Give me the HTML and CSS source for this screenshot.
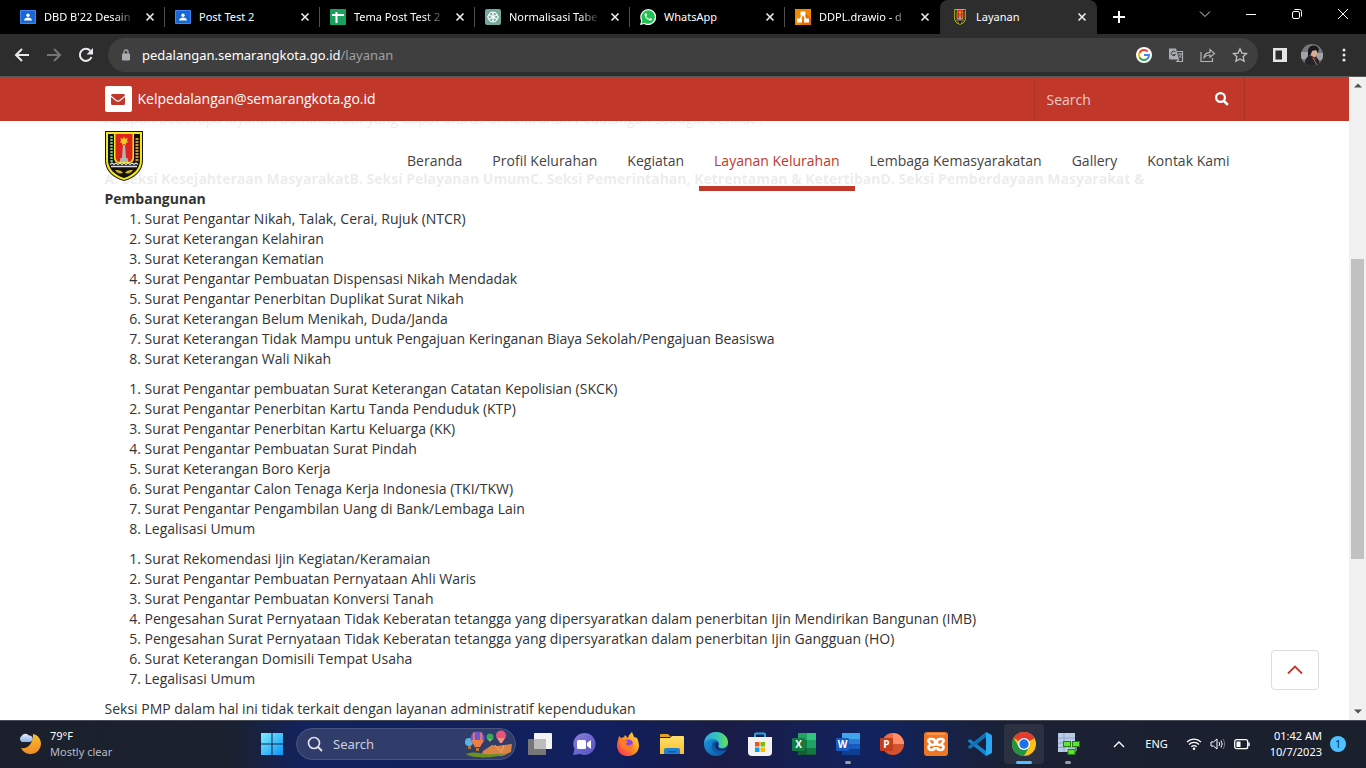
FILE: index.html
```html
<!DOCTYPE html>
<html lang="id">
<head>
<meta charset="utf-8">
<title>Layanan</title>
<link rel="stylesheet" href="styles.css">
</head>
<body>
<svg class="defs" aria-hidden="true">
  <defs>
    <linearGradient id="moon" x1="0" y1="0" x2="0" y2="1"><stop offset="0" stop-color="#f9c02f"/><stop offset="1" stop-color="#f08a24"/></linearGradient>
    <linearGradient id="cloud" x1="0" y1="0" x2="0" y2="1"><stop offset="0" stop-color="#e4edfb"/><stop offset="1" stop-color="#8fb1ea"/></linearGradient>
    <linearGradient id="win" gradientUnits="userSpaceOnUse" x1="1" y1="1" x2="23" y2="23"><stop offset="0" stop-color="#7df0ff"/><stop offset="1" stop-color="#0a93f5"/></linearGradient>
    <linearGradient id="meet" x1="0" y1="0" x2="1" y2="1"><stop offset="0" stop-color="#8f7fd6"/><stop offset="1" stop-color="#4f50c8"/></linearGradient>
    <linearGradient id="fox" x1="1" y1="0" x2="0" y2="1"><stop offset="0" stop-color="#ffe84a"/><stop offset=".45" stop-color="#ff9420"/><stop offset="1" stop-color="#f5225f"/></linearGradient>
    <linearGradient id="edge1" x1="0" y1="0" x2="1" y2="0"><stop offset="0" stop-color="#2aa8e8"/><stop offset=".6" stop-color="#37c8b4"/><stop offset="1" stop-color="#6be04f"/></linearGradient>
    <linearGradient id="edge2" x1="0" y1="0" x2="1" y2="1"><stop offset="0" stop-color="#1fa0e6"/><stop offset="1" stop-color="#0c4fa0"/></linearGradient>
    <linearGradient id="folder" x1="0" y1="0" x2="0" y2="1"><stop offset="0" stop-color="#ffdf6b"/><stop offset="1" stop-color="#f9bf2c"/></linearGradient>
    <symbol id="classroom" viewBox="0 0 16 14"><rect width="16" height="14" rx="1" fill="#4285f4"/><rect x="1" y="1" width="14" height="12" fill="#1967d2"/><circle cx="8" cy="5.300" r="1.700" fill="#fff"/><path d="M4 10.500c.4-2.200 2-3 4-3s3.600.8 4 3z" fill="#fff"/></symbol>
    <symbol id="x" viewBox="0 0 10 10"><path d="M1.500 1.500l7 7M8.500 1.500l-7 7" stroke="#e8e8e8" stroke-width="1.700" fill="none"/></symbol>
    <symbol id="crest" viewBox="0 0 38 50">
      <path d="M0 0H38V29C38 40 30 47 19 50C8 47 0 40 0 29Z" fill="#15150a"/>
      <path d="M1 1H37V29C37 39 30 46 19 49C8 46 1 39 1 29Z" fill="#f2e61c"/>
      <path d="M3 3H35V29C35 37 29 44 19 47C9 44 3 37 3 29Z" fill="#111"/>
      <path d="M9 2H29V27Q29 31 25 32H13Q9 31 9 27Z" fill="#f2e61c"/>
      <path d="M10.500 3H27.500V27Q27 30 24 31H14Q11 30 10.500 27Z" fill="#dd241c"/>
      <path d="M18 14h2l1 13h1.500l1 4h-9l1-4H17z" fill="#b4b4b4"/>
      <path d="M19 5.500l1 2.200 2.800-.5-1 2.500 1.700 1.500-2.400.6-.3 2.200-1.800-1-1.800 1-.3-2.200-2.400-.6 1.700-1.500-1-2.500 2.800.5z" fill="#edc81f"/>
      <path d="M6.500 5V31" stroke="#71c58b" stroke-width="2.400" stroke-dasharray="2 1"/>
      <path d="M32 7V30" stroke="#d8931c" stroke-width="3" stroke-dasharray="2 1"/>
      <path d="M5 33.500l2-1.500 2 1.500 2-1.500 2 1.500 2-1.500 2 1.500 2-1.500 2 1.500 2-1.500 2 1.500 2-1.500 2 1.500 2-1.500 2 1.500M6 35.500h26" stroke="#dedede" stroke-width="1.300" fill="none"/>
      <path d="M10 39c3 0 6 0 8 3-4 1-6 0-8-3zM28 39c-3 0-6 0-8 3 4 1 6 0 8-3z" fill="#d6b31e"/><path d="M17 44l2-4 2 4-2 2z" fill="#111"/>
    </symbol>
  </defs>
</svg>

<header class="browser">
  <div class="tabs">
    <div class="tab"><svg class="fav classroom"><use href="#classroom"/></svg><span class="tab-title faded">DBD B'22 Desain</span><button class="tab-close" aria-label="Tutup tab"><svg><use href="#x"/></svg></button></div>
    <div class="tab"><svg class="fav classroom"><use href="#classroom"/></svg><span class="tab-title">Post Test 2</span><button class="tab-close" aria-label="Tutup tab"><svg><use href="#x"/></svg></button></div>
    <div class="tab"><svg class="fav" viewBox="0 0 16 16"><rect width="16" height="16" rx="1" fill="#18a05e"/><path d="M2 6h12M6.500 3v11" stroke="#fff" stroke-width="2"/></svg><span class="tab-title faded">Tema Post Test 2</span><button class="tab-close" aria-label="Tutup tab"><svg><use href="#x"/></svg></button></div>
    <div class="tab"><svg class="fav" viewBox="0 0 16 16"><rect width="16" height="16" rx="2" fill="#75a99b"/><g fill="none" stroke="#fff" stroke-width=".8"><ellipse cx="8" cy="5.300" rx="3.600" ry="2.300"/><ellipse cx="8" cy="5.300" rx="3.600" ry="2.300" transform="rotate(60 8 8)"/><ellipse cx="8" cy="5.300" rx="3.600" ry="2.300" transform="rotate(120 8 8)"/><ellipse cx="8" cy="5.300" rx="3.600" ry="2.300" transform="rotate(180 8 8)"/><ellipse cx="8" cy="5.300" rx="3.600" ry="2.300" transform="rotate(240 8 8)"/><ellipse cx="8" cy="5.300" rx="3.600" ry="2.300" transform="rotate(300 8 8)"/></g></svg><span class="tab-title faded">Normalisasi Tabe</span><button class="tab-close" aria-label="Tutup tab"><svg><use href="#x"/></svg></button></div>
    <div class="tab"><svg class="fav" viewBox="0 0 16 16"><path d="M0 16l1.200-4.100A8 8 0 1 1 4.200 15z" fill="#fff"/><path d="M1.500 14.500l.9-3A6.700 6.700 0 1 1 4.600 13.700z" fill="#1fc24e"/><path d="M5.500 4.200c-1 .6-1.200 1.700-.5 3.100 1 2 2.400 3.400 4.300 4 1.500.5 2.500-.1 2.700-1.400L10.300 9l-1 1C8 9.500 7 8.500 6.300 7.200l.8-1-.7-2z" fill="#fff"/></svg><span class="tab-title">WhatsApp</span><button class="tab-close" aria-label="Tutup tab"><svg><use href="#x"/></svg></button></div>
    <div class="tab"><svg class="fav" viewBox="0 0 16 16"><rect width="16" height="16" fill="#f08705"/><path d="M10 4L16 10v6H6z" fill="#df6c0c"/><path d="M8 4L4.500 12M8 4l3.500 8" stroke="#fff" stroke-width="1.500"/><rect x="5.500" y="2.500" width="5" height="4" rx=".5" fill="#fff"/><rect x="2" y="9.500" width="5" height="4" rx=".5" fill="#fff"/><rect x="9" y="9.500" width="5" height="4" rx=".5" fill="#fff"/></svg><span class="tab-title faded">DDPL.drawio - d</span><button class="tab-close" aria-label="Tutup tab"><svg><use href="#x"/></svg></button></div>
    <div class="tab active"><svg class="fav" viewBox="0 0 38 50"><use href="#crest" width="38" height="50"/></svg><span class="tab-title">Layanan</span><button class="tab-close" aria-label="Tutup tab"><svg><use href="#x"/></svg></button></div>
    <button class="new-tab" aria-label="Tab baru"><svg viewBox="0 0 12 12"><path d="M6 0v12M0 6h12" stroke="#fff" stroke-width="2"/></svg></button>
    <div class="window-buttons">
      <button aria-label="Cari tab"><svg viewBox="0 0 12 12"><path d="M1 3.500l5 5 5-5" stroke="#ddd" fill="none"/></svg></button>
      <button aria-label="Kecilkan"><svg viewBox="0 0 12 12"><path d="M1 6.500h10" stroke="#fff"/></svg></button>
      <button aria-label="Pulihkan"><svg viewBox="0 0 12 12"><rect x="1.500" y="3.500" width="7" height="7" rx="1.500" stroke="#fff" fill="none"/><path d="M3.500 1.500h5a2 2 0 0 1 2 2v5" stroke="#fff" fill="none"/></svg></button>
      <button aria-label="Tutup"><svg viewBox="0 0 12 12"><path d="M1 1l10 10M11 1L1 11" stroke="#fff"/></svg></button>
    </div>
  </div>
  <div class="toolbar">
    <button class="tool" aria-label="Kembali"><svg viewBox="0 0 16 16"><path d="M15 8H2.500M8 2L2 8l6 6" stroke="#e8eaed" stroke-width="2" fill="none"/></svg></button>
    <button class="tool" aria-label="Maju"><svg viewBox="0 0 16 16"><path d="M1 8h12.500M8 2l6 6-6 6" stroke="#757575" stroke-width="2" fill="none"/></svg></button>
    <button class="tool" aria-label="Muat ulang"><svg viewBox="0 0 16 16"><path d="M13.500 10A6 6 0 1 1 12.300 3.800" stroke="#e8eaed" stroke-width="2" fill="none"/><path d="M15 1v6.500H8.500z" fill="#e8eaed"/></svg></button>
    <div class="address">
      <svg class="lock" viewBox="0 0 10 12"><rect x="1" y="4.500" width="8" height="7" rx="1" fill="#aaadb1"/><path d="M3 5V3a2 2 0 0 1 4 0v2" stroke="#aaadb1" stroke-width="1.300" fill="none"/></svg>
      <span class="url">pedalangan.semarangkota.go.id<span class="path">/layanan</span></span>
      <div class="addr-icons">
      <svg viewBox="0 0 16 16"><circle cx="8" cy="8" r="8" fill="#fff"/><path d="M11.700 4.500A5 5 0 0 0 3.500 5.800" stroke="#ea4335" stroke-width="2" fill="none"/><path d="M3.500 5.800a5 5 0 0 0 0 4.500" stroke="#fbbc05" stroke-width="2" fill="none"/><path d="M3.500 10.300a5 5 0 0 0 7.800 1.500" stroke="#34a853" stroke-width="2" fill="none"/><path d="M11.300 11.800A5 5 0 0 0 13 8H8" stroke="#4285f4" stroke-width="2" fill="none"/></svg>
      <svg viewBox="0 0 16 16"><path d="M1 1.500h7l3 11H2.500A1.500 1.500 0 0 1 1 11z" fill="#aaadb1"/><path d="M9 4.500h5.500v10H9l2-2" stroke="#aaadb1" stroke-width="1.200" fill="none"/><path d="M7.300 5A2.200 2.200 0 1 0 7.500 7.500H5.500" stroke="#3c3c3c" fill="none"/><path d="M10 7h4M12 6v1M13.200 7c-.5 2-1.500 3-2.700 4M11 8.500l2.500 2.700" stroke="#aaadb1" fill="none"/></svg>
      <svg viewBox="0 0 16 16"><path d="M1 5v9.500h11.500V11M4 10.500C4.500 7 7 5.500 10 5.300V2.500l4.500 4L10 10.300V8C7.500 8 5.500 8.800 4 10.500z" stroke="#b4b4b4" stroke-width="1.200" fill="none"/></svg>
      <svg viewBox="0 0 16 16"><path d="M8 1.800l1.900 4.300 4.700.4-3.500 3.200 1 4.600L8 11.900l-4.100 2.400 1-4.600L1.400 6.500l4.700-.4z" stroke="#bfc1c4" stroke-width="1.300" fill="none"/></svg>
      </div>
    </div>
    <button class="tool side" aria-label="Panel samping"><svg viewBox="0 0 14 14"><path fill-rule="evenodd" d="M0 0h14v14H0zM2.500 2.500v9H9v-9z" fill="#e6e6e6"/></svg></button>
    <button class="tool profile" aria-label="Profil"><svg viewBox="0 0 22 22"><clipPath id="av"><circle cx="11" cy="11" r="11"/></clipPath><g clip-path="url(#av)"><rect width="22" height="22" fill="#77777d"/><path d="M0 8h8v7H0zM16 9h6v7h-6z" fill="#a3a3aa"/><path d="M3 22C4 14 7 11 11 12c5 0 8 4 8 10z" fill="#25242d"/><path d="M10 5h6v6l-3 3-3-3z" fill="#d9ad91"/><path d="M7 7c0-6 8-8 11-2l-1 4-2-3-4 1-1 3-3 3z" fill="#181820"/><path d="M10 12l6 2-3 2z" fill="#6f2c2a"/><path d="M12 14l4 7" stroke="#a58155"/></g></svg></button>
    <button class="tool menu" aria-label="Menu"><svg viewBox="0 0 4 14"><circle cx="2" cy="2" r="1.500" fill="#e8eaed"/><circle cx="2" cy="7" r="1.500" fill="#e8eaed"/><circle cx="2" cy="12" r="1.500" fill="#e8eaed"/></svg></button>
  </div>
</header>

<div class="page">
  <div class="site">
    <div class="site-header">
      <div class="topbar"><div class="container topbar-row">
        <a class="mail" href="#"><span class="mail-box"><svg viewBox="0 0 14 11"><path d="M0 1.500Q0 0 1.500 0h11Q14 0 14 1.500L8.500 6Q7 7 5.500 6z" fill="#c1382b"/><path d="M0 3l4.800 4q2.200 1.500 4.400 0L14 3v6.500q0 1.500-1.500 1.500h-11Q0 11 0 9.500z" fill="#c1382b"/></svg></span>Kelpedalangan@semarangkota.go.id</a>
        <form class="search"><input type="text" placeholder="Search" aria-label="Search"><button type="button" aria-label="Cari"><svg viewBox="0 0 14 14"><circle cx="5.500" cy="5.500" r="4.400" stroke="#fff" stroke-width="2.200" fill="none"/><path d="M8.800 8.800l4 4" stroke="#fff" stroke-width="2.600"/></svg></button></form>
      </div></div>
      <div class="navbar"><div class="container nav-row">
        <a class="logo" href="#" aria-label="Kelurahan Pedalangan"><svg viewBox="0 0 38 50"><use href="#crest"/></svg></a>
        <nav>
          <a href="#">Beranda</a><a href="#">Profil Kelurahan</a><a href="#">Kegiatan</a><a href="#" class="current">Layanan Kelurahan</a><a href="#">Lembaga Kemasyarakatan</a><a href="#">Gallery</a><a href="#">Kontak Kami</a>
        </nav>
      </div></div>
    </div>
    <main class="container content">
      <p class="intro">Adapun beberapa layanan administratif yang dapat diurus di Kelurahan Pedalangan sebagai berikut :</p>
      <p class="sections"><strong>A. Seksi Kesejahteraan MasyarakatB. Seksi Pelayanan UmumC. Seksi Pemerintahan, Ketrentaman &amp; KetertibanD. Seksi Pemberdayaan Masyarakat &amp; Pembangunan</strong></p>
      <ol>
        <li>Surat Pengantar Nikah, Talak, Cerai, Rujuk (NTCR)</li>
        <li>Surat Keterangan Kelahiran</li>
        <li>Surat Keterangan Kematian</li>
        <li>Surat Pengantar Pembuatan Dispensasi Nikah Mendadak</li>
        <li>Surat Pengantar Penerbitan Duplikat Surat Nikah</li>
        <li>Surat Keterangan Belum Menikah, Duda/Janda</li>
        <li>Surat Keterangan Tidak Mampu untuk Pengajuan Keringanan Biaya Sekolah/Pengajuan Beasiswa</li>
        <li>Surat Keterangan Wali Nikah</li>
      </ol>
      <ol>
        <li>Surat Pengantar pembuatan Surat Keterangan Catatan Kepolisian (SKCK)</li>
        <li>Surat Pengantar Penerbitan Kartu Tanda Penduduk (KTP)</li>
        <li>Surat Pengantar Penerbitan Kartu Keluarga (KK)</li>
        <li>Surat Pengantar Pembuatan Surat Pindah</li>
        <li>Surat Keterangan Boro Kerja</li>
        <li>Surat Pengantar Calon Tenaga Kerja Indonesia (TKI/TKW)</li>
        <li>Surat Pengantar Pengambilan Uang di Bank/Lembaga Lain</li>
        <li>Legalisasi Umum</li>
      </ol>
      <ol>
        <li>Surat Rekomendasi Ijin Kegiatan/Keramaian</li>
        <li>Surat Pengantar Pembuatan Pernyataan Ahli Waris</li>
        <li>Surat Pengantar Pembuatan Konversi Tanah</li>
        <li>Pengesahan Surat Pernyataan Tidak Keberatan tetangga yang dipersyaratkan dalam penerbitan Ijin Mendirikan Bangunan (IMB)</li>
        <li>Pengesahan Surat Pernyataan Tidak Keberatan tetangga yang dipersyaratkan dalam penerbitan Ijin Gangguan (HO)</li>
        <li>Surat Keterangan Domisili Tempat Usaha</li>
        <li>Legalisasi Umum</li>
      </ol>
      <p>Seksi PMP dalam hal ini tidak terkait dengan layanan administratif kependudukan</p>
    </main>
    <button class="to-top" aria-label="Ke atas"><svg viewBox="0 0 16 10"><path d="M1 8.500L8 1.500l7 7" stroke="#c1382b" stroke-width="1.800" fill="none"/></svg></button>
  </div>
  <div class="scrollbar">
    <svg viewBox="0 0 8 5"><path d="M0 4.500L4 .5l4 4z" fill="#505050"/></svg>
    <div class="track"><div class="thumb"></div></div>
    <svg viewBox="0 0 8 5"><path d="M0 .5h8l-4 4z" fill="#505050"/></svg>
  </div>
</div>

<footer class="taskbar">
  <div class="weather">
    <svg viewBox="0 0 24 24"><path d="M15 2c5 1 8 5 8 10a10.500 10.500 0 0 1-20 4c7 1 12-4 12-14z" fill="url(#moon)"/><path d="M4 10a3.500 3.500 0 0 1-.5-6A4.500 4.500 0 0 1 11 3.500 3.300 3.300 0 0 1 12 10z" fill="url(#cloud)"/></svg>
    <div><div class="temp">79°F</div><div class="sky">Mostly clear</div></div>
  </div>
  <div class="apps">
    <button class="app" aria-label="Mulai"><svg viewBox="0 0 24 24"><path d="M1 1h10.500v10.500H1zM12.500 1H23v10.500H12.500zM1 12.500h10.500V23H1zM12.500 12.500H23V23H12.500z" fill="url(#win)"/></svg></button>
    <button class="task-search"><svg class="glass" viewBox="0 0 16 16"><circle cx="7" cy="7" r="5.500" fill="none" stroke="#e4e6ee" stroke-width="1.600"/><path d="M11 11l4 4" stroke="#e4e6ee" stroke-width="1.800"/></svg><span>Search</span>
      <svg class="balloons" viewBox="0 0 48 28"><path d="M18 21l9-6 5 1 15-2-1 8-9 4H16z" fill="#d98345"/><path d="M30 15l5 6M39 15l-3 8" stroke="#f0a868"/><path d="M1 24c8-3 13-1 20 0 6 1 12-1 18 0-6 4-33 5-38 0z" fill="#6b8f23"/><circle cx="4" cy="12" r="4" fill="#57b6e8"/><path d="M3 16h3v3H3z" fill="#a8703a"/><circle cx="12.500" cy="8.500" r="7" fill="#6d57d0"/><path d="M6 10h13l-4 7h-5z" fill="#e88434"/><path d="M9 2.500Q8 10 11 17M16 2.500Q17 10 14 17" stroke="#f4735c" stroke-width="2" fill="none"/><path d="M11 18h3v3h-3z" fill="#b87632"/><circle cx="25" cy="7" r="3.500" fill="#3fa659"/><path d="M23 9l2 3 2-3z" fill="#8bc34a"/><circle cx="36" cy="5.500" r="5" fill="#e8557c"/><path d="M32 8h8l-3 5h-2z" fill="#ef8e7e"/></svg>
    </button>
    <button class="app" aria-label="Tampilan tugas"><svg viewBox="0 0 24 24"><rect x="6" y="1" width="18" height="16" rx="1" fill="#f4f4f4"/><rect y="7" width="18" height="16" rx="1" fill="#777"/><rect x="6" y="7" width="12" height="10" fill="#bdbdbd"/></svg></button>
    <button class="app" aria-label="Chat"><svg viewBox="0 0 24 24"><path d="M12 1a11 11 0 1 1-4 21l-7 1 1.500-6A11 11 0 0 1 12 1z" fill="url(#meet)"/><rect x="5" y="8" width="9" height="9" rx="1.500" fill="#fff"/><path d="M15 11l4-3v9l-4-3z" fill="#fff"/></svg></button>
    <button class="app" aria-label="Firefox"><svg viewBox="0 0 24 24"><path d="M3 4l2 2 3-1 1-2 3 3 1-3 3-3 2 5 3 1c4 8 2 17-8 18C3 25-1 16 2 8z" fill="url(#fox)"/><circle cx="12.500" cy="12" r="4.500" fill="#8a46d8"/><path d="M4 7c4 0 5 2 8 2l-2 3c2 3 5 1 7-1 0 6-7 9-12 4z" fill="#ff7b28"/></svg></button>
    <button class="app" aria-label="File Explorer"><svg viewBox="0 0 24 24"><path d="M0 3q0-1 1-1h7l3 3H0z" fill="#e3a21a"/><path d="M0 6h10l2-2h11q1 0 1 1v17H0z" fill="url(#folder)"/><path d="M4 22v-4q0-2 2-2h12q2 0 2 2v4z" fill="#1f7fd1"/><rect x="8" y="19" width="8" height="1.500" fill="#0b57a4"/></svg></button>
    <button class="app" aria-label="Edge"><svg viewBox="0 0 24 24"><circle cx="12" cy="12" r="12" fill="url(#edge2)"/><path d="M0 11C1 4 6 0 12 0c7 0 12 5 12 10 0 4-3 6-6 6-3 0-4-1-3-3 1-3-2-6-6-6-4 0-8 2-9 4z" fill="url(#edge1)"/><path d="M9 10c-4 7 2 12 7 11 3 0 5-2 7-4-3 1-10 2-11-3 0-2 1-3 1-5z" fill="#0b5ba9"/><path d="M12 10c2 0 3 2 2 4 0 2 2 3 4 3 2 0 4-1 6-3l-1 4c-8 2-12-1-12-5z" fill="#152b66"/></svg></button>
    <button class="app" aria-label="Microsoft Store"><svg viewBox="0 0 24 24"><path d="M7 6V2.500Q7 1.500 8 1.500h8q1 0 1 1V6" fill="none" stroke="#26a6e8" stroke-width="2"/><path d="M0 5h24v15q0 4-4 4H4q-4 0-4-4z" fill="#f2f2f2"/><path d="M7 10h4.500v4.500H7z" fill="#f25022"/><path d="M12.500 10H17v4.500h-4.500z" fill="#7fba00"/><path d="M7 15.500h4.500V20H7z" fill="#00a4ef"/><path d="M12.500 15.500H17V20h-4.500z" fill="#ffb900"/></svg></button>
    <button class="app" aria-label="Excel"><svg viewBox="0 0 24 24"><rect x="6" y="1" width="18" height="22" rx="1" fill="#21a366"/><path d="M15 1h8q1 0 1 1v6h-9z" fill="#33c481"/><path d="M6 8h9v8H6z" fill="#107c41"/><path d="M6 16h18v6q0 1-1 1H7q-1 0-1-1z" fill="#185c37"/><path d="M15 16h9v6h-9z" fill="#107c41"/><rect y="6" width="13" height="13" rx="1" fill="#107c41"/><text x="6.500" y="16" class="glyph">X</text></svg></button>
    <button class="app running" aria-label="Word"><svg viewBox="0 0 24 24"><rect x="6" y="1" width="18" height="22" rx="1" fill="#2b7cd3"/><path d="M6 1h17q1 0 1 1v5H6z" fill="#41a5ee"/><path d="M6 12h18v6H6z" fill="#185abd"/><path d="M6 17h18v5q0 1-1 1H6z" fill="#103f91"/><rect y="6" width="13" height="13" rx="1" fill="#185abd"/><text x="6.500" y="16" class="glyph">W</text></svg></button>
    <button class="app" aria-label="PowerPoint"><svg viewBox="0 0 24 24"><circle cx="13" cy="12" r="11" fill="#d35230"/><path d="M13 1a11 11 0 0 0-11 11h11z" fill="#ed6c47"/><path d="M13 1a11 11 0 0 1 11 11H13z" fill="#ff8f6b"/><rect y="6" width="13" height="13" rx="1" fill="#c43e1c"/><text x="6.500" y="16" class="glyph">P</text></svg></button>
    <button class="app" aria-label="XAMPP"><svg viewBox="0 0 24 24"><rect width="24" height="24" rx="3" fill="#ef7625"/><path d="M3 2h18" stroke="#ffb782"/><path d="M4.500 7H8q3 0 3 3v1.500q0 1.500-1.500 1.500H7q-2.500 0-2.500 2.300T7 18q4 0 4-3M19.500 7H16q-3 0-3 3v1.500q0 1.500 1.500 1.500H17q2.500 0 2.500 2.300T17 18q-4 0-4-3M9 12.500h6M4.500 7v2.500l2.500 3M19.500 7v2.500l-2.500 3" fill="none" stroke="#fff" stroke-width="2.600" stroke-linejoin="round"/></svg></button>
    <button class="app" aria-label="Visual Studio Code"><svg viewBox="0 0 24 24"><path d="M0 8.500L2 7l16 12v5L0 9.500z" fill="#1584cb"/><path d="M0 15.500L2 17 18 5V0L0 14.500z" fill="#0f73b8"/><path d="M18 0l5 2.500q1 .5 1 1.500v16q0 1-1 1.500L18 24z" fill="#2aa8f2"/></svg></button>
    <button class="app running focused" aria-label="Chrome"><svg viewBox="0 0 24 24"><circle cx="12" cy="12" r="12" fill="#fbc116"/><path d="M12 12L1.600 6A12 12 0 0 1 22.400 6z" fill="#e33b2e"/><path d="M1.600 6A12 12 0 0 0 12 24l5.200-9L12 12 6.800 15z" fill="#229342"/><path d="M12 6h10.400L12 12z" fill="#e33b2e"/><circle cx="12" cy="12" r="6" fill="#fff"/><circle cx="12" cy="12" r="4.700" fill="#1a73e8"/></svg></button>
    <button class="app running" aria-label="Database"><svg viewBox="0 0 24 24"><rect x="2" y="1" width="17" height="19" fill="#b8cbe4"/><path d="M2 6h17M2 11h17M2 15.500h17M8 1v19" stroke="#8fa5c6"/><path d="M11 13v6h3M20 13v6h-2" stroke="#d5e9cf" fill="none"/><rect x="7.500" y="9.500" width="7" height="5" fill="#5ce52d" stroke="#287d1b"/><rect x="16.500" y="9.500" width="7" height="5" fill="#5ce52d" stroke="#287d1b"/><rect x="12" y="17.500" width="7" height="5" fill="#5ce52d" stroke="#287d1b"/></svg></button>
  </div>
  <div class="tray">
    <svg class="chev" viewBox="0 0 12 8"><path d="M1 7l5-5 5 5" stroke="#fff" stroke-width="1.400" fill="none"/></svg>
    <span class="lang">ENG</span>
    <svg class="net" viewBox="0 0 16 14"><path d="M1 5a10 10 0 0 1 14 0M3 7.500a7 7 0 0 1 10 0M5.300 9.800a4 4 0 0 1 5.400 0" stroke="#fff" stroke-width="1.200" fill="none"/><circle cx="8" cy="11.800" r="1.300" fill="#fff"/></svg>
    <svg class="net" viewBox="0 0 16 14"><path d="M1 5h2.500L7 2v10L3.500 9H1z" stroke="#fff" fill="none"/><path d="M9 5q1.500 2 0 4M11 3.500q2.500 3.500 0 7" stroke="#fff" fill="none"/><path d="M13 2q3.500 5 0 10" stroke="#777" fill="none"/></svg>
    <svg class="net" viewBox="0 0 16 14"><rect x=".7" y="2.700" width="13" height="9" rx="2" stroke="#fff" stroke-width="1.300" fill="none"/><rect x="2.500" y="4.500" width="4" height="5.500" fill="#fff"/><path d="M15 5.500v3.500" stroke="#fff" stroke-width="1.500"/></svg>
    <div class="clock"><div>01:42 AM</div><div>10/7/2023</div></div>
    <span class="notice">1</span>
  </div>
</footer>
</body>
</html>
```
FILE: styles.css
```css
* { box-sizing: border-box; }
body { margin: 0; height: 100vh; display: flex; flex-direction: column; overflow: hidden; font-family: "Open Sans", "Noto Sans", sans-serif; font-size: 14px; line-height: 20px; color: #333; background: #fff; }
button { border: 0; padding: 0; background: none; font: inherit; color: inherit; display: flex; align-items: center; justify-content: center; }
a { color: inherit; text-decoration: none; }
svg { display: block; flex: none; }
.defs { position: absolute; width: 0; height: 0; }

.browser { flex: none; color: #fff; font-family: "Noto Sans", "Open Sans", sans-serif; }
.tabs { display: flex; height: 34px; background: #000; padding-left: 10px; }
.tab { position: relative; flex: 0 1 155px; min-width: 0; display: flex; align-items: center; gap: 8px; padding: 0 10px; font-size: 11px; }
.tab:not(.active)::after { content: ""; position: absolute; right: 0; top: 7px; width: 1px; height: 20px; background: #505050; }
.tab:nth-child(6)::after { display: none; }
.fav { width: 16px; height: 16px; }
.classroom { height: 14px; }
.tab-title { flex: 1; white-space: nowrap; }
.faded { mask-image: linear-gradient(to right, #000 76%, transparent 98%); }
.tab-close svg { width: 10px; height: 10px; }
.tab.active { background: #2d2d2d; border-radius: 8px 8px 0 0; flex-basis: 157px; padding-left: 12px; }
.new-tab { width: 44px; }
.new-tab svg { width: 12px; height: 12px; }
.window-buttons { margin-left: auto; display: flex; height: 28px; }
.window-buttons button { width: 46px; }
.window-buttons svg { width: 12px; height: 12px; }
.toolbar { display: flex; align-items: center; height: 43px; background: #2d2d2d; border-bottom: 1px solid #58595b; padding: 0 6px; }
.tool { width: 32px; height: 32px; }
.tool svg { width: 16px; height: 16px; }
.address { flex: 1; height: 34px; border-radius: 17px; background: #3f3f3f; display: flex; align-items: center; gap: 11px; padding: 0 10px 0 13px; margin: 0 6px; }
.lock { width: 10px; height: 12px; }
.url { flex: 1; font-size: 13px; white-space: nowrap; }
.path { color: #a0a0a0; }
.addr-icons { display: flex; gap: 16px; }
.addr-icons svg { width: 16px; height: 16px; }
.toolbar .side svg { width: 14px; height: 14px; }
.toolbar .profile svg { width: 22px; height: 22px; }
.toolbar .menu svg { width: 4px; height: 14px; }

.page { flex: 1; min-height: 0; display: flex; }
.site { flex: 1; min-width: 0; position: relative; overflow: hidden; }
.container { max-width: 1140px; margin: 0 auto; }
.site-header { position: absolute; top: 0; left: 0; right: 0; z-index: 2; }
.topbar { background: #c1382b; color: #fff; }
.topbar-row { display: flex; justify-content: space-between; height: 44px; }
.mail { display: flex; align-items: center; gap: 6px; }
.mail-box { width: 27px; height: 26px; background: #fff; border-radius: 2px; display: flex; align-items: center; justify-content: center; }
.mail-box svg { width: 14px; height: 11px; }
.search { display: flex; width: 211px; border: solid #ac3227; border-width: 0 1px; }
.search input { flex: 1; min-width: 0; border: 0; background: none; padding: 2px 12px 0; font: inherit; color: #fff; }
.search input::placeholder { color: #eccbc8; opacity: 1; }
.search button { width: 44px; }
.search svg { width: 14px; height: 14px; }
.navbar { background: rgba(255, 255, 255, .91); }
.nav-row { display: flex; justify-content: space-between; height: 70px; }
.logo { padding-top: 10px; }
.logo svg { width: 38px; height: 50px; }
nav { display: flex; color: #444; }
nav a { padding: 30px 15px 0; border-bottom: 5px solid transparent; }
nav .current { color: #c1382b; border-color: #c1382b; }
.content { padding-top: 32px; }
p { margin: 0 0 10px; }
.intro { margin-bottom: 40px; }
.sections { margin: 0; }
ol { margin: 0 0 10px; padding-left: 40px; }
.to-top { position: absolute; right: 30px; bottom: 30px; width: 48px; height: 40px; border: 1px solid #ddd; border-radius: 4px; background: #fff; }
.to-top svg { width: 16px; height: 10px; }
.scrollbar { width: 17px; background: #f1f1f1; display: flex; flex-direction: column; align-items: center; padding: 6px 0; }
.scrollbar svg { width: 8px; height: 5px; }
.track { flex: 1; align-self: stretch; padding: 171px 2px 0; }
.thumb { height: 300px; background: #c1c1c1; }

.taskbar { flex: none; display: flex; align-items: center; height: 48px; padding-bottom: 1px; border-top: 1px solid #484c58; background: linear-gradient(90deg, #1c202c 0, #1b2130 17%, #12225c 22%, #111f5e 45%, #1a1c46 53%, #11235f 64%, #1b2034 74%, #1b202d 100%); color: #fff; font-family: "Noto Sans", "Open Sans", sans-serif; font-size: 11px; line-height: 16px; }
.weather { flex: 0 0 252px; display: flex; align-items: center; gap: 8px; padding-left: 18px; }
.weather svg { width: 24px; height: 24px; }
.sky { color: #b9bcc4; }
.apps { display: flex; align-items: center; gap: 4px; }
.app { position: relative; width: 40px; height: 40px; border-radius: 4px; }
.app svg { width: 24px; height: 24px; }
.glyph { font: bold 10px "Open Sans", sans-serif; fill: #fff; text-anchor: middle; }
.running::after { content: ""; position: absolute; bottom: 0; width: 6px; height: 3px; border-radius: 2px; background: #9a9ca3; }
.focused { background: #2c3142; }
.focused::after { width: 16px; background: #4cc2ff; }
.task-search { width: 220px; height: 32px; border-radius: 16px; border: 1px solid #49557e; background: #303d6b; justify-content: flex-start; gap: 10px; padding: 0 2px 0 10px; font-size: 13px; color: #ccd0dd; }
.glass { width: 16px; height: 16px; }
.balloons { width: 48px; height: 28px; margin-left: auto; }
.tray { margin-left: auto; display: flex; align-items: center; gap: 8px; padding-right: 20px; }
.chev { width: 12px; height: 8px; margin-right: 12px; }
.lang { margin-right: 10px; }
.net { width: 16px; height: 14px; }
.clock { text-align: right; margin-left: 12px; }
.notice { width: 16px; height: 16px; border-radius: 8px; background: #4cc2ff; color: #123; text-align: center; font-size: 10px; }
```
